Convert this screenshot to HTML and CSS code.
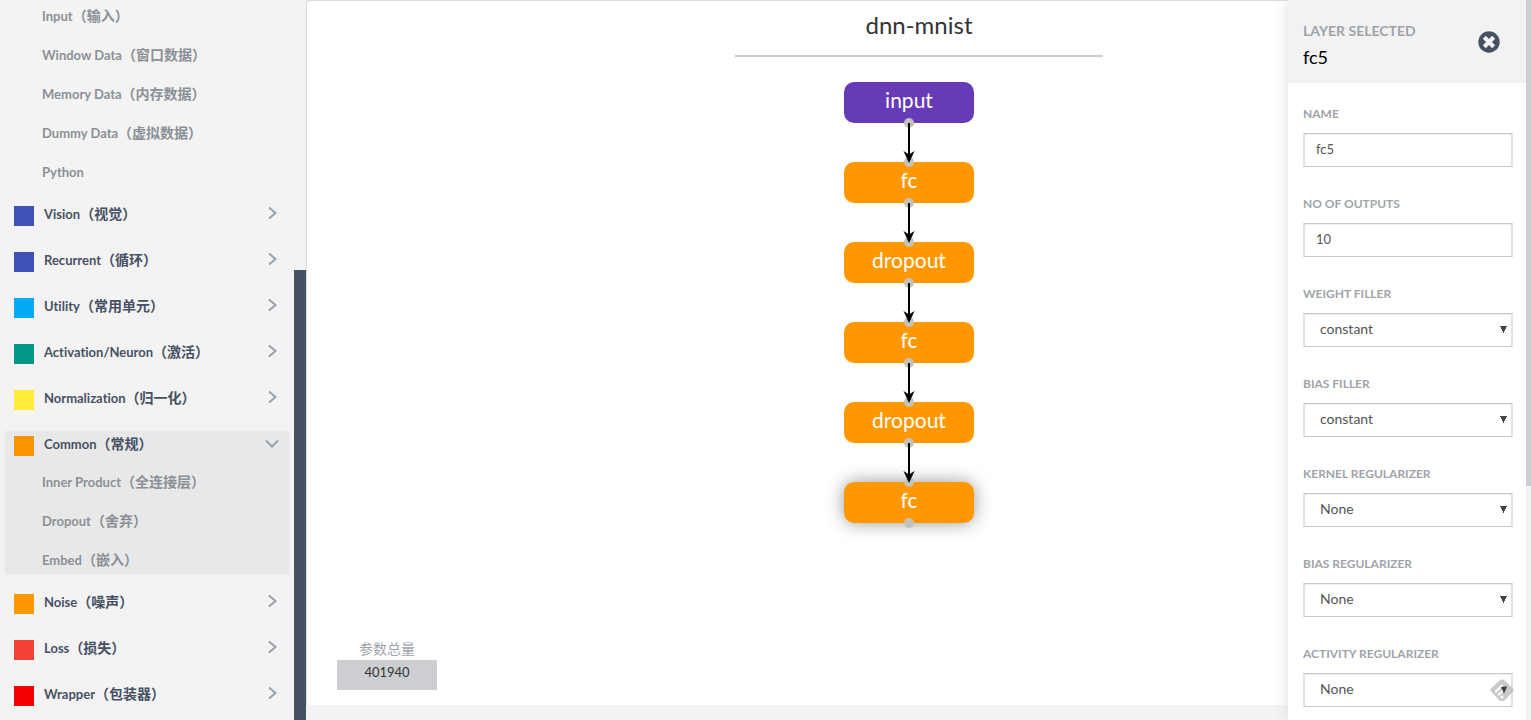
FILE: index.html
```html
<!DOCTYPE html>
<html lang="zh-CN">
<head>
<meta charset="utf-8">
<title>dnn-mnist</title>
<link rel="stylesheet" href="styles.css">
</head>
<body>
<div class="app">
  <nav class="sidebar">
    <section class="group open-top">
      <ul class="sub">
        <li><a href="#">Input<b>（输入）</b></a></li>
        <li><a href="#">Window Data<b>（窗口数据）</b></a></li>
        <li><a href="#">Memory Data<b>（内存数据）</b></a></li>
        <li><a href="#">Dummy Data<b>（虚拟数据）</b></a></li>
        <li><a href="#">Python</a></li>
      </ul>
    </section>
    <section class="group"><button class="head"><i class="swatch indigo"></i><span>Vision<b>（视觉）</b></span><svg class="chev" viewBox="0 0 14 14"><path d="M4 1.500l6.500 5.500L4 12.500"/></svg></button></section>
    <section class="group"><button class="head"><i class="swatch indigo"></i><span>Recurrent<b>（循环）</b></span><svg class="chev" viewBox="0 0 14 14"><path d="M4 1.500l6.500 5.500L4 12.500"/></svg></button></section>
    <section class="group"><button class="head"><i class="swatch blue"></i><span>Utility<b>（常用单元）</b></span><svg class="chev" viewBox="0 0 14 14"><path d="M4 1.500l6.500 5.500L4 12.500"/></svg></button></section>
    <section class="group"><button class="head"><i class="swatch teal"></i><span>Activation/Neuron<b>（激活）</b></span><svg class="chev" viewBox="0 0 14 14"><path d="M4 1.500l6.500 5.500L4 12.500"/></svg></button></section>
    <section class="group"><button class="head"><i class="swatch yellow"></i><span>Normalization<b>（归一化）</b></span><svg class="chev" viewBox="0 0 14 14"><path d="M4 1.500l6.500 5.500L4 12.500"/></svg></button></section>
    <section class="group open">
      <button class="head"><i class="swatch amber"></i><span>Common<b>（常规）</b></span><svg class="chev" viewBox="0 0 14 14"><path d="M1 4.500l6 6 6-6"/></svg></button>
      <ul class="sub">
        <li><a href="#">Inner Product<b>（全连接层）</b></a></li>
        <li><a href="#">Dropout<b>（舍弃）</b></a></li>
        <li><a href="#">Embed<b>（嵌入）</b></a></li>
      </ul>
    </section>
    <section class="group"><button class="head"><i class="swatch orange"></i><span>Noise<b>（噪声）</b></span><svg class="chev" viewBox="0 0 14 14"><path d="M4 1.500l6.500 5.500L4 12.500"/></svg></button></section>
    <section class="group"><button class="head"><i class="swatch coral"></i><span>Loss<b>（损失）</b></span><svg class="chev" viewBox="0 0 14 14"><path d="M4 1.500l6.500 5.500L4 12.500"/></svg></button></section>
    <section class="group"><button class="head"><i class="swatch red"></i><span>Wrapper<b>（包装器）</b></span><svg class="chev" viewBox="0 0 14 14"><path d="M4 1.500l6.500 5.500L4 12.500"/></svg></button></section>
  </nav>
  <div class="track"><div class="thumb"></div></div>
  <main class="canvas">
    <h1 class="title">dnn-mnist</h1>
    <div class="graph">
      <div class="node purple n1">input</div>
      <div class="node n2">fc</div>
      <div class="node n3">dropout</div>
      <div class="node n4">fc</div>
      <div class="node n5">dropout</div>
      <div class="node n6 selected">fc</div>
      <svg class="edges" width="130" height="460" viewBox="0 0 130 460">
        <defs>
          <g id="edge"><circle cx="65" cy="41" r="5" fill="#c3c3bd"/><circle cx="65" cy="80" r="5" fill="#c3c3bd"/><path d="M65 41v32" stroke="#000" stroke-width="2"/><path d="M65 81l-5.500-12 5.500 3.500 5.500-3.500z"/></g>
        </defs>
        <use href="#edge"/><use href="#edge" y="80"/><use href="#edge" y="160"/><use href="#edge" y="240"/><use href="#edge" y="320"/>
        <circle cx="65" cy="441" r="5" fill="#c3c3bd"/>
      </svg>
    </div>
    <div class="params"><span>参数总量</span><output>401940</output></div>
  </main>
  <aside class="panel">
    <header class="panel-head">
      <div><h2>LAYER SELECTED</h2><p>fc5</p></div>
      <button class="close" aria-label="Close"><svg viewBox="0 0 22 22"><circle cx="11" cy="11" r="10.700" fill="#475164"/><path d="M7.800 7.800l6.400 6.400M14.200 7.800l-6.400 6.400" stroke="#f2f2f2" stroke-width="4.200" stroke-linecap="square"/></svg></button>
    </header>
    <form class="fields">
      <div class="field"><label for="name">NAME</label><input id="name" value="fc5"></div>
      <div class="field"><label for="outs">NO OF OUTPUTS</label><input id="outs" value="10"></div>
      <div class="field"><label for="wf">WEIGHT FILLER</label><select id="wf"><option>constant</option></select></div>
      <div class="field"><label for="bf">BIAS FILLER</label><select id="bf"><option>constant</option></select></div>
      <div class="field"><label for="kr">KERNEL REGULARIZER</label><select id="kr"><option>None</option></select></div>
      <div class="field"><label for="br">BIAS REGULARIZER</label><select id="br"><option>None</option></select></div>
      <div class="field"><label for="ar">ACTIVITY REGULARIZER</label><select id="ar"><option>None</option></select></div>
    </form>
    <div class="panel-scroll"></div>
  </aside>
  <svg class="feed" viewBox="0 0 24 22"><path d="M10 1q2-1.500 4 0l9 8.500q1.500 1.500 0 3L15 21q-1 1-2 1h-2q-1 0-2-1L1 12.500q-1.500-1.500 0-3z" fill="#b5b5b5" fill-opacity=".72"/><path d="M6 12.500l6-6M9 15.500l5-5" stroke="#fff" stroke-width="2.400" stroke-linecap="round"/><circle cx="12" cy="18" r="1.500" fill="#fff"/><path d="M11 8h6l-3 6.500z" fill="#444"/></svg>
</div>
</body>
</html>
```
FILE: styles.css
```css
* { box-sizing: border-box; }
body { margin: 0; font-family: Lato, "Noto Sans CJK SC", sans-serif; font-size: 14px; font-variant-ligatures: none; color: #333; background: #f3f3f3; }
h1, h2, p, ul { margin: 0; padding: 0; }
ul { list-style: none; }
a { color: inherit; text-decoration: none; }
button { border: 0; background: none; padding: 0; font: inherit; color: inherit; cursor: pointer; }
.app { position: relative; display: flex; height: 100vh; overflow: hidden; }

.sidebar { flex: 0 0 294px; padding: 2px 5px 0; overflow: hidden; font-size: 13px; font-weight: 700; }
.sidebar b { font-size: 14px; font-weight: 700; line-height: 20px; }
.group { margin-bottom: 20px; }
.open-top, .open { margin-bottom: 15px; }
.open { background: #e8e8e8; box-shadow: 0 1px 4px #ececec; }
.head { display: flex; align-items: flex-start; width: 100%; height: 26px; padding: 0 10px 0 9px; color: #475164; text-align: left; line-height: 26px; }
.head span { flex: 1; margin-left: 10px; }
.swatch { width: 20px; height: 20px; margin-top: 5px; }
.indigo { background: #3f51b5; }
.blue { background: #03a9f4; }
.teal { background: #009688; }
.yellow { background: #ffeb3b; }
.amber { background: #f79400; }
.orange { background: #ff9800; }
.coral { background: #f44336; }
.red { background: #f20000; }
.chev { width: 14px; height: 14px; margin-top: 5px; fill: none; stroke: #97a0ab; stroke-width: 2; }
.sub { display: grid; gap: 11px; padding-left: 37px; color: #8b9097; line-height: 28px; }
.sub li { height: 28px; }
.open .sub { padding-top: 11px; }
.track { flex: 0 0 12px; padding-top: 270px; }
.thumb { height: 100%; background: #475164; }

.canvas { position: relative; flex: 1; margin-bottom: 15px; background: #fff; border: 1px solid #d9d9d9; border-width: 1px 0 0 1px; border-radius: 4px 0 0; }
.title { width: 30%; margin: 0 auto; padding: 2px 0 8px; border-bottom: 2px solid #cdced2; text-align: center; font-size: 24px; font-weight: 400; line-height: 44px; }
.graph { position: absolute; left: 537px; top: 81px; width: 130px; height: 460px; }
.node { position: absolute; left: 0; width: 130px; height: 41px; border-radius: 10px; background: #ff9800; color: #fff; font-size: 21px; line-height: 36px; text-align: center; }
.purple { background: #673ab7; }
.selected { box-shadow: 0 0 18px #999; }
.n1 { top: 0; }
.n2 { top: 80px; }
.n3 { top: 160px; }
.n4 { top: 240px; }
.n5 { top: 320px; }
.n6 { top: 400px; }
.edges { position: absolute; left: 0; top: 0; }
.params { position: absolute; left: 30px; bottom: 15px; width: 100px; text-align: center; color: #9fa3aa; line-height: 22px; }
.params span { display: block; }
.params output { display: block; height: 30px; background: #cdced2; color: #333; font-size: 13px; line-height: 24px; }

.panel { position: absolute; right: 0; top: 0; bottom: 0; width: 243px; padding-right: 5px; background: #fff; box-shadow: 0 0 14px #ddd; }
.panel-head { display: flex; justify-content: space-between; height: 83px; padding: 20px 26px 0 15px; background: #f2f2f2; }
.panel-head h2 { font-size: 14px; font-weight: 700; line-height: 22px; color: #9fa3aa; }
.panel-head p { font-size: 18px; line-height: 30px; color: #000; }
.close { width: 22px; height: 22px; margin-top: 11px; }
.close svg { display: block; }
.fields { display: grid; gap: 26px; padding: 20px 13px 0 15px; }
.field { height: 64px; }
.field label { display: block; height: 30px; font-size: 12px; font-weight: 700; line-height: 22px; color: #9fa3aa; }
.field input, .field select { display: block; width: 100%; height: 34px; padding: 0 11px 3px; border: 1px solid; border-width: 1px 2px; border-color: #c8c8c8 #e2e2e2; border-radius: 0; background: #fff; box-shadow: inset 0 1px 1px #eee; color: #555; font: inherit; appearance: none; outline: 0; }
.field input { font-size: 13px; }
.field select { padding-left: 15px; background: conic-gradient(from -27deg at 50% 100%, #444 54deg, transparent 54deg) no-repeat right 4px top 12px / 7px 7px #fff; }
.panel-scroll { position: absolute; right: 0; top: 0; bottom: 0; width: 5px; background: linear-gradient(#cdced2 67.5%, #f3f3f3 67.5%); }
.feed { position: absolute; right: 17px; bottom: 19px; width: 24px; height: 22px; }
```
